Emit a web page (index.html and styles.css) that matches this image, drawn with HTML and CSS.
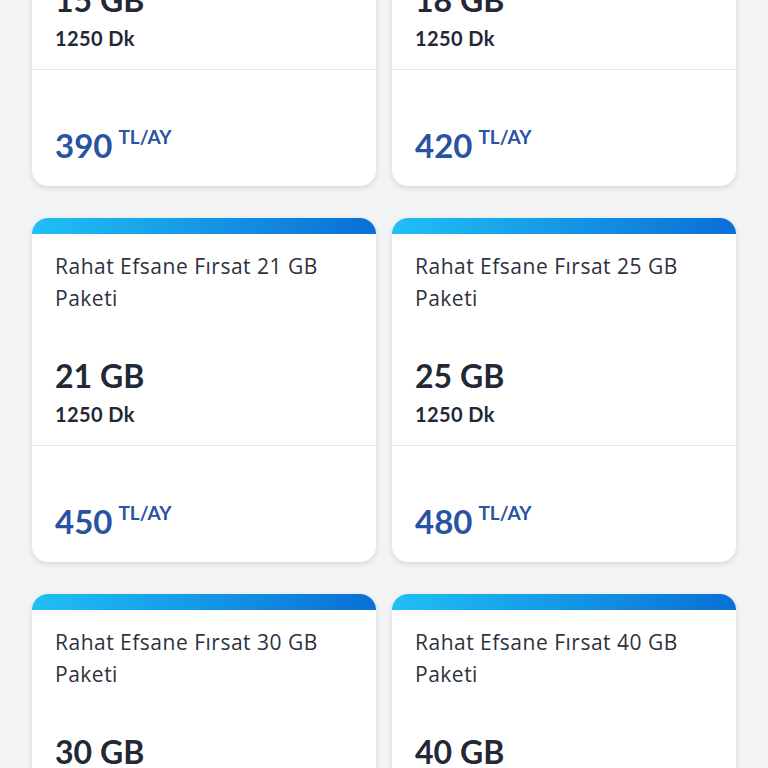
FILE: index.html
```html
<!DOCTYPE html>
<html>
<head>
    <title>Rahat Efsane Fırsat Paketleri</title>
    <link rel="stylesheet" href="styles.css">
</head>
<body>
    <div class="plans">
        <div class="card">
            <div class="card-bar"></div>
            <div class="card-body">
                <p class="title">Rahat Efsane Fırsat 15 GB Paketi</p>
                <p class="data">15 GB</p>
                <p class="minutes">1250 Dk</p>
            </div>
            <div class="card-price">
                <span class="amount">390</span><span class="unit">TL/AY</span>
            </div>
        </div>
        <div class="card">
            <div class="card-bar"></div>
            <div class="card-body">
                <p class="title">Rahat Efsane Fırsat 18 GB Paketi</p>
                <p class="data">18 GB</p>
                <p class="minutes">1250 Dk</p>
            </div>
            <div class="card-price">
                <span class="amount">420</span><span class="unit">TL/AY</span>
            </div>
        </div>
        <div class="card">
            <div class="card-bar"></div>
            <div class="card-body">
                <p class="title">Rahat Efsane Fırsat 21 GB Paketi</p>
                <p class="data">21 GB</p>
                <p class="minutes">1250 Dk</p>
            </div>
            <div class="card-price">
                <span class="amount">450</span><span class="unit">TL/AY</span>
            </div>
        </div>
        <div class="card">
            <div class="card-bar"></div>
            <div class="card-body">
                <p class="title">Rahat Efsane Fırsat 25 GB Paketi</p>
                <p class="data">25 GB</p>
                <p class="minutes">1250 Dk</p>
            </div>
            <div class="card-price">
                <span class="amount">480</span><span class="unit">TL/AY</span>
            </div>
        </div>
        <div class="card">
            <div class="card-bar"></div>
            <div class="card-body">
                <p class="title">Rahat Efsane Fırsat 30 GB Paketi</p>
                <p class="data">30 GB</p>
                <p class="minutes">1250 Dk</p>
            </div>
            <div class="card-price">
                <span class="amount">520</span><span class="unit">TL/AY</span>
            </div>
        </div>
        <div class="card">
            <div class="card-bar"></div>
            <div class="card-body">
                <p class="title">Rahat Efsane Fırsat 40 GB Paketi</p>
                <p class="data">40 GB</p>
                <p class="minutes">1250 Dk</p>
            </div>
            <div class="card-price">
                <span class="amount">580</span><span class="unit">TL/AY</span>
            </div>
        </div>
    </div>
</body>
</html>
```

FILE: styles.css
```css
body {
    font-family: Lato, "Open Sans", sans-serif;
    background-color: #f3f4f6;
    margin: 0;
}

p {
    margin: 0;
}

/* page is scrolled: first row starts above the viewport */
.plans {
    display: grid;
    grid-template-columns: 344px 344px;
    column-gap: 16px;
    row-gap: 32px;
    padding: 0 32px;
    margin-top: -158px;
}

.card {
    background-color: #ffffff;
    border-radius: 16px;
    overflow: hidden;
    box-shadow: 0 2px 6px rgba(0, 0, 0, 0.12);
    height: 344px;
    display: flex;
    flex-direction: column;
}

.card-bar {
    height: 16px;
    background: linear-gradient(90deg, #20bff4, #0a6fd6);
}

.card-body {
    padding: 16px 23px 19px;
    border-bottom: 1px solid #e4e6ea;
}

.title {
    font-family: "Open Sans", sans-serif;
    font-size: 21px;
    line-height: 32px;
    letter-spacing: 0.5px;
    height: 64px;
    color: #2d323c;
    padding-right: 10px;
}

.data {
    margin-top: 42px;
    font-size: 32px;
    line-height: 40px;
    font-weight: 700;
    color: #222836;
}

.minutes {
    margin-top: 6px;
    font-size: 20px;
    line-height: 24px;
    font-weight: 700;
    letter-spacing: 0.4px;
    color: #222836;
}

.card-price {
    padding: 55px 23px 0;
    display: flex;
    align-items: flex-start;
    color: #2a52a3;
}

.amount {
    font-size: 33px;
    line-height: 40px;
    font-weight: 700;
}

.unit {
    font-size: 19px;
    line-height: 24px;
    font-weight: 700;
    margin-left: 6px;
}
```
